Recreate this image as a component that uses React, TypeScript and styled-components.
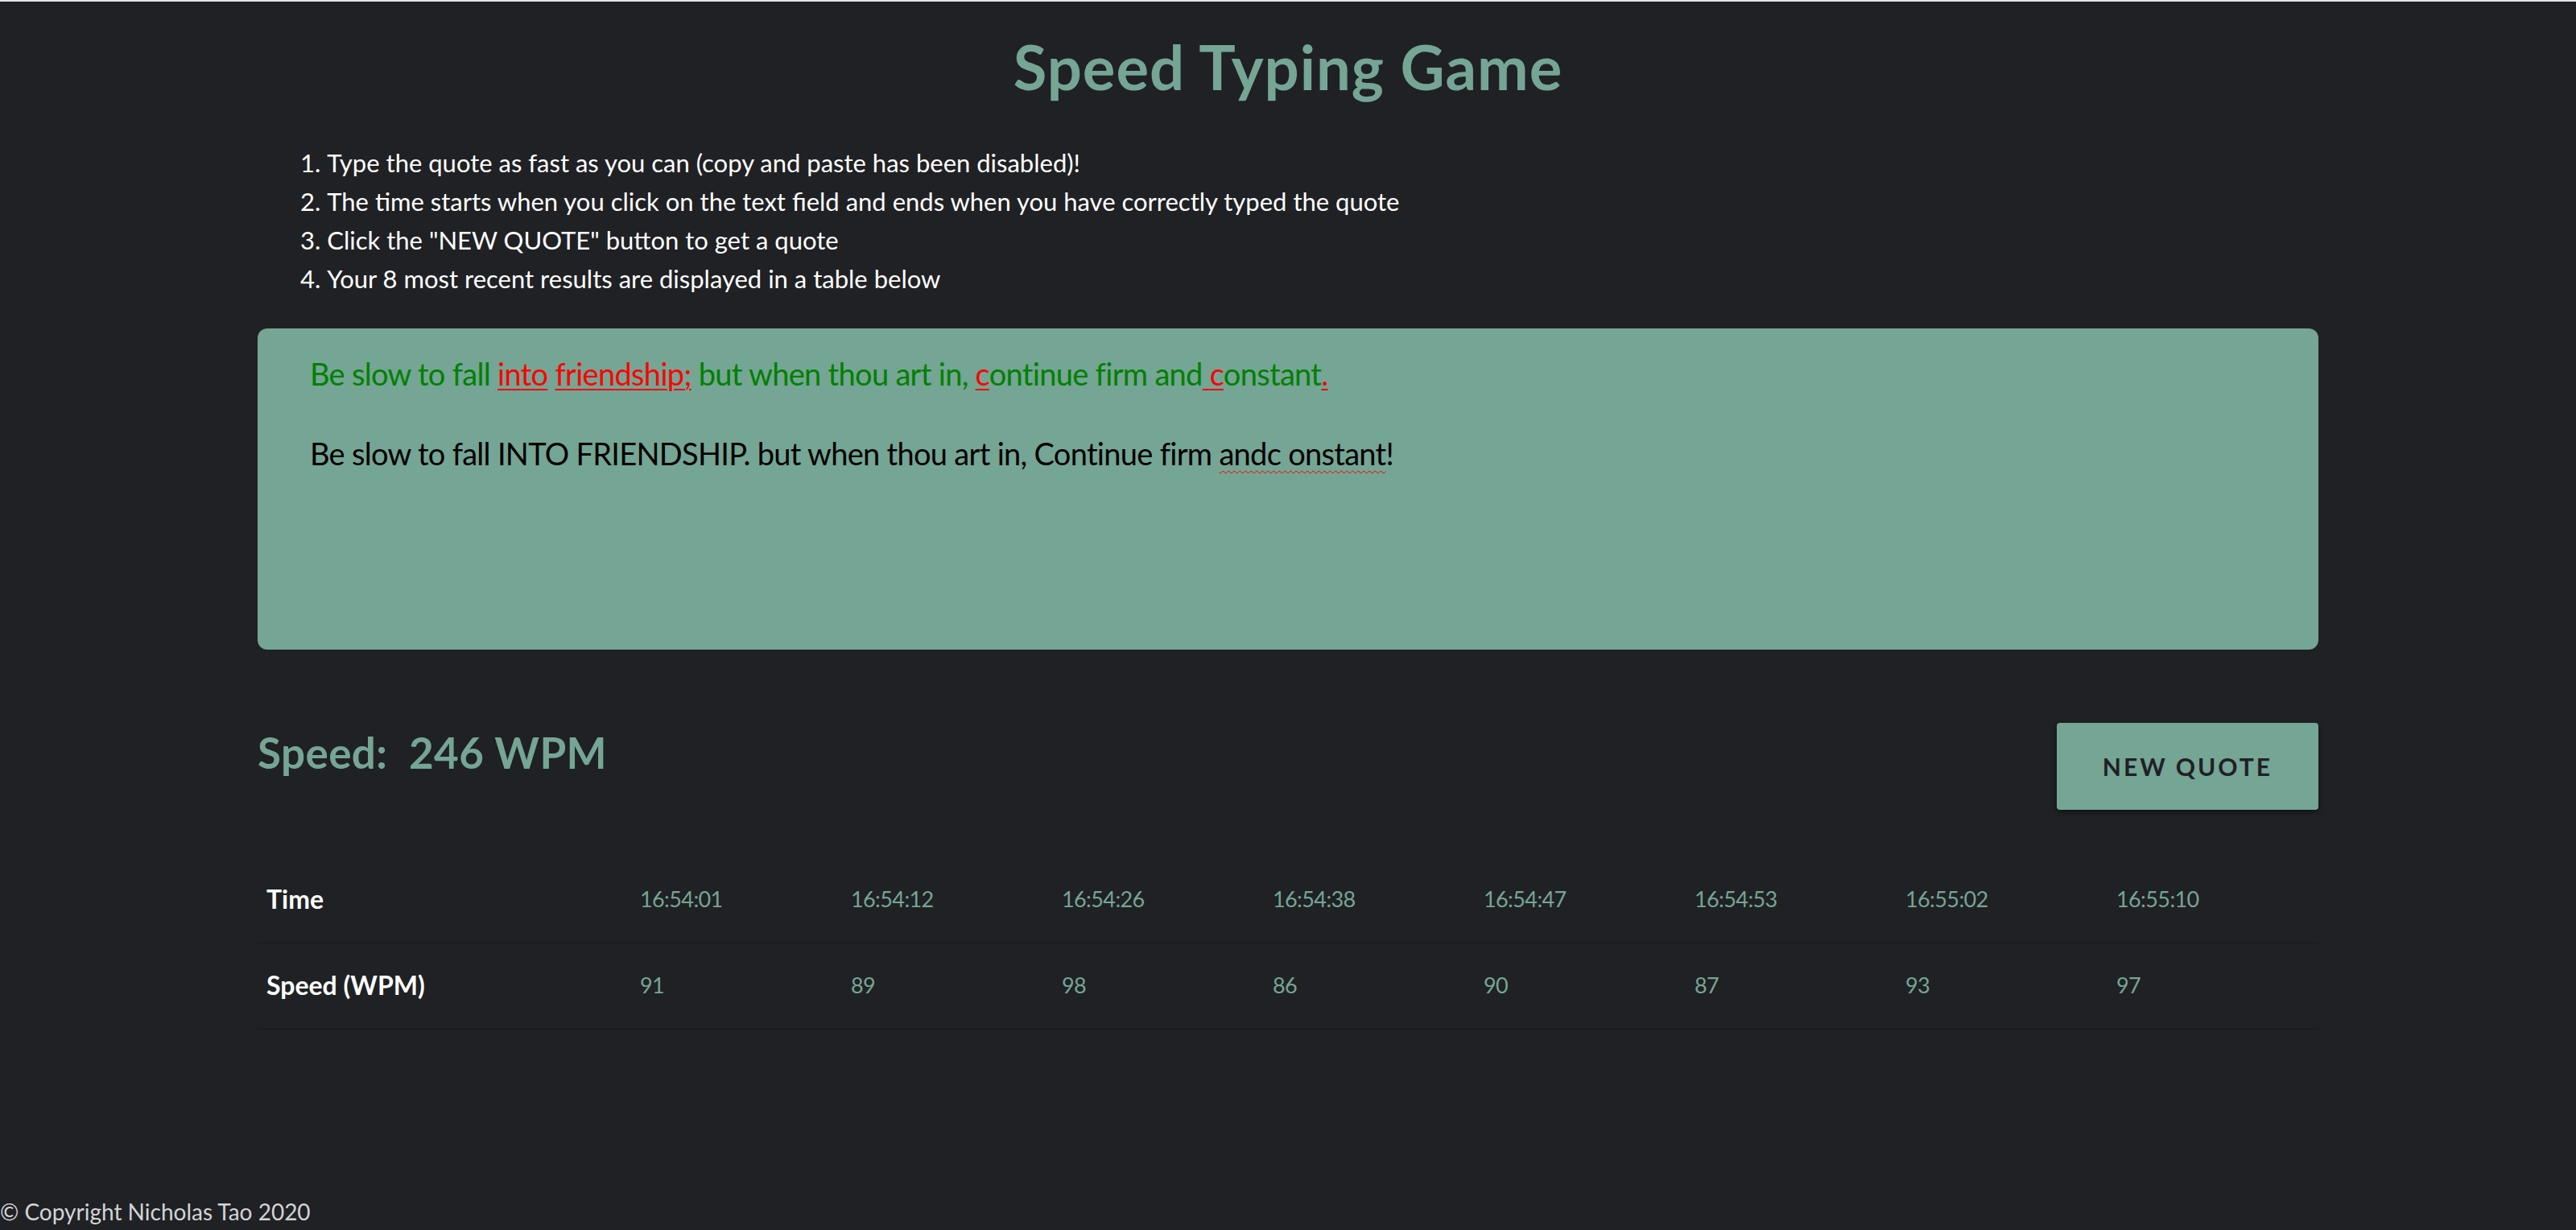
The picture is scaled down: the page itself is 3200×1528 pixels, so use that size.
import React from "react";
import styled, { createGlobalStyle } from "styled-components";

const TEAL = "#75a594";
const BG = "#202124";
const FONT = `"Gill Sans", "Gill Sans MT", Lato, "Noto Sans", sans-serif`;

const GlobalStyle = createGlobalStyle`
  html, body {
    margin: 0;
    padding: 0;
    background: ${BG};
  }
  body {
    font-family: ${FONT};
  }
  * { box-sizing: border-box; }
`;

const Page = styled.div`
  min-height: 100vh;
  display: flex;
  flex-direction: column;
  background: ${BG};
  border-top: 2px solid #e4e4e4;
`;

const Main = styled.main`
  width: 2560px;
  margin: 0 auto;
  display: flex;
  flex-direction: column;
`;

const Title = styled.h1`
  margin: 35px 0 0;
  text-align: center;
  font-size: 76px;
  line-height: 1.2;
  font-weight: 700;
  color: ${TEAL};
  letter-spacing: 1px;
`;

const Instructions = styled.ol`
  margin: 50px 0 0;
  padding: 0 0 0 53px;
  list-style-position: inside;
  color: #ffffff;
  font-size: 31px;
  line-height: 48px;
`;

const Instruction = styled.li`
  margin: 0;
`;

const QuoteCard = styled.section`
  margin-top: 38px;
  height: 399px;
  border-radius: 12px;
  background: ${TEAL};
  padding: 34px 65px 0;
  display: flex;
  flex-direction: column;
  gap: 53px;
  font-size: 38px;
  line-height: 1.2;
  letter-spacing: -0.7px;
`;

const QuoteLine = styled.div`
  color: #008000;
  white-space: pre-wrap;
`;

const Char = styled.span<{ $wrong: boolean }>`
  color: ${(p) => (p.$wrong ? "#ff0000" : "inherit")};
  text-decoration: ${(p) => (p.$wrong ? "underline" : "none")};
  text-decoration-thickness: 2px;
  text-underline-offset: 4px;
`;

const TypedLine = styled.div`
  color: #000000;
  white-space: pre-wrap;
`;

const Misspelled = styled.span`
  text-decoration: underline wavy #ff0000;
  text-decoration-thickness: 1px;
  text-underline-offset: 6px;
`;

const StatsRow = styled.div`
  margin-top: 91px;
  display: flex;
  justify-content: space-between;
  align-items: flex-start;
`;

const SpeedLabel = styled.h2`
  margin: 5px 0 0;
  font-size: 53px;
  line-height: 1.2;
  font-weight: 700;
  letter-spacing: 0.4px;
  color: ${TEAL};
`;

const NewQuoteButton = styled.button`
  width: 325px;
  height: 108px;
  border: none;
  border-radius: 4px;
  background: ${TEAL};
  color: ${BG};
  font-family: ${FONT};
  font-size: 30px;
  font-weight: 700;
  letter-spacing: 3px;
  box-shadow: 0 3px 6px rgba(0, 0, 0, 0.45);
  cursor: pointer;
`;

const ResultsTable = styled.table`
  margin-top: 58px;
  width: 2560px;
  table-layout: fixed;
  border-collapse: collapse;
  line-height: 1.2;
`;

const Row = styled.tr`
  height: 107px;
  border-bottom: 2px solid #1b1c1e;
`;

const HeaderCell = styled.th`
  text-align: left;
  padding: 0 0 0 11px;
  color: #ffffff;
  font-size: 32px;
  font-weight: 700;
`;

const DataCell = styled.td`
  padding: 0 0 0 11px;
  color: ${TEAL};
  font-size: 27px;
  letter-spacing: -0.6px;
  font-weight: 400;
`;

const Footer = styled.footer`
  margin-top: auto;
  padding: 0 0 5px 0;
  font-size: 28px;
  line-height: 1.2;
  color: #d2d4d6;
`;

const quote =
  "Be slow to fall into friendship; but when thou art in, continue firm and constant.";
const typed =
  "Be slow to fall INTO FRIENDSHIP. but when thou art in, Continue firm andc onstant!";

const times = [
  "16:54:01",
  "16:54:12",
  "16:54:26",
  "16:54:38",
  "16:54:47",
  "16:54:53",
  "16:55:02",
  "16:55:10",
];
const speeds = [91, 89, 98, 86, 90, 87, 93, 97];

export default function App() {
  return (
    <>
      <GlobalStyle />
      <Page>
        <Main>
          <Title>Speed Typing Game</Title>
          <Instructions>
            <Instruction>
              Type the quote as fast as you can (copy and paste has been disabled)!
            </Instruction>
            <Instruction>
              The time starts when you click on the text field and ends when you have
              correctly typed the quote
            </Instruction>
            <Instruction>Click the "NEW QUOTE" button to get a quote</Instruction>
            <Instruction>Your 8 most recent results are displayed in a table below</Instruction>
          </Instructions>
          <QuoteCard>
            <QuoteLine>
              {quote.split("").map((c, i) => (
                <Char key={i} $wrong={typed[i] !== c}>
                  {c}
                </Char>
              ))}
            </QuoteLine>
            <TypedLine>
              Be slow to fall INTO FRIENDSHIP. but when thou art in, Continue firm{" "}
              <Misspelled>andc onstant</Misspelled>!
            </TypedLine>
          </QuoteCard>
          <StatsRow>
            <SpeedLabel>Speed:&nbsp; 246 WPM</SpeedLabel>
            <NewQuoteButton>NEW QUOTE</NewQuoteButton>
          </StatsRow>
          <ResultsTable>
            <colgroup>
              <col style={{ width: 464 }} />
              {times.map((t) => (
                <col key={t} style={{ width: 262 }} />
              ))}
            </colgroup>
            <tbody>
              <Row>
                <HeaderCell>Time</HeaderCell>
                {times.map((t) => (
                  <DataCell key={t}>{t}</DataCell>
                ))}
              </Row>
              <Row>
                <HeaderCell>Speed (WPM)</HeaderCell>
                {speeds.map((s, i) => (
                  <DataCell key={i}>{s}</DataCell>
                ))}
              </Row>
            </tbody>
          </ResultsTable>
        </Main>
        <Footer>© Copyright Nicholas Tao 2020</Footer>
      </Page>
    </>
  );
}
